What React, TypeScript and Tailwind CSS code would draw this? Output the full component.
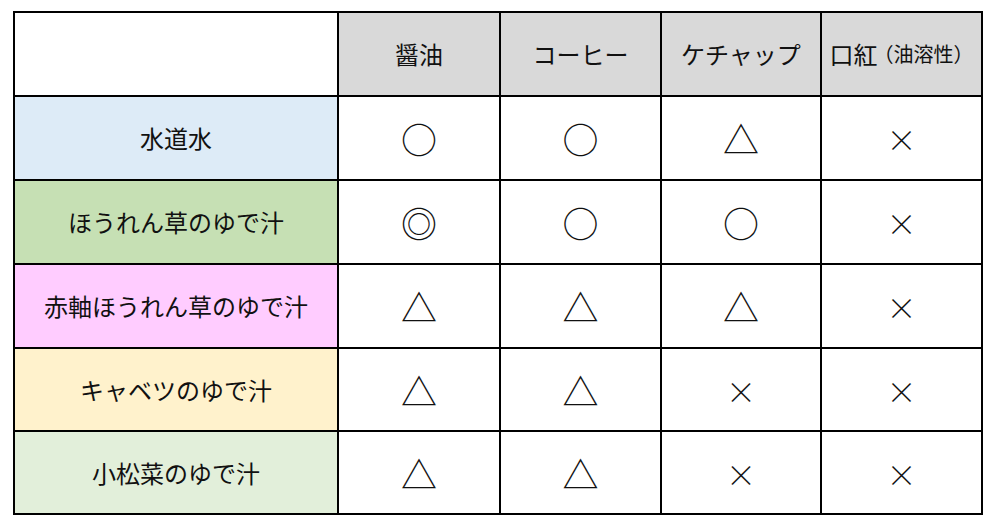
const headers = ['醤油', 'コーヒー', 'ケチャップ'];

const rows = [
    { name: '水道水', bg: 'bg-[#ddebf7]', marks: ['○', '○', '△', '×'] },
    { name: 'ほうれん草のゆで汁', bg: 'bg-[#c6e0b4]', marks: ['◎', '○', '○', '×'] },
    { name: '赤軸ほうれん草のゆで汁', bg: 'bg-[#ffccff]', marks: ['△', '△', '△', '×'] },
    { name: 'キャベツのゆで汁', bg: 'bg-[#fff2cc]', marks: ['△', '△', '×', '×'] },
    { name: '小松菜のゆで汁', bg: 'bg-[#e2efda]', marks: ['△', '△', '×', '×'] },
];

function Mark({ m }: { m: string }) {
    if (m === '×') {
        return <span className="text-[30px] leading-none font-light">{m}</span>;
    }
    return <span className="text-[36px] leading-none">{m}</span>;
}

export default function App() {
    return (
        <div
            className="w-[1000px] h-[532px] bg-white pl-[13px] pt-[11px] text-[#111]"
            style={{ fontFamily: '"Noto Sans CJK JP", "Noto Sans", sans-serif' }}
        >
            <div className="inline-grid grid-cols-[322px_160px_159px_158px_159px] grid-rows-[82px_82px_82px_82px_81px_81px] gap-[2px] p-[2px] bg-black">
                <div className="bg-white" />
                {headers.map((h) => (
                    <div key={h} className="bg-[#d9d9d9] flex items-center justify-center text-[24px]">
                        {h}
                    </div>
                ))}
                <div className="bg-[#d9d9d9] flex items-center justify-center text-[24px]">
                    <span>口紅</span>
                    <span className="text-[20px] ml-[-4px]">（油溶性）</span>
                </div>

                {rows.map((r) => (
                    <div key={r.name} className="contents">
                        <div className={`${r.bg} flex items-center justify-center text-[24px]`}>{r.name}</div>
                        {r.marks.map((m, i) => (
                            <div key={i} className="bg-white flex items-center justify-center">
                                <Mark m={m} />
                            </div>
                        ))}
                    </div>
                ))}
            </div>
        </div>
    );
}
